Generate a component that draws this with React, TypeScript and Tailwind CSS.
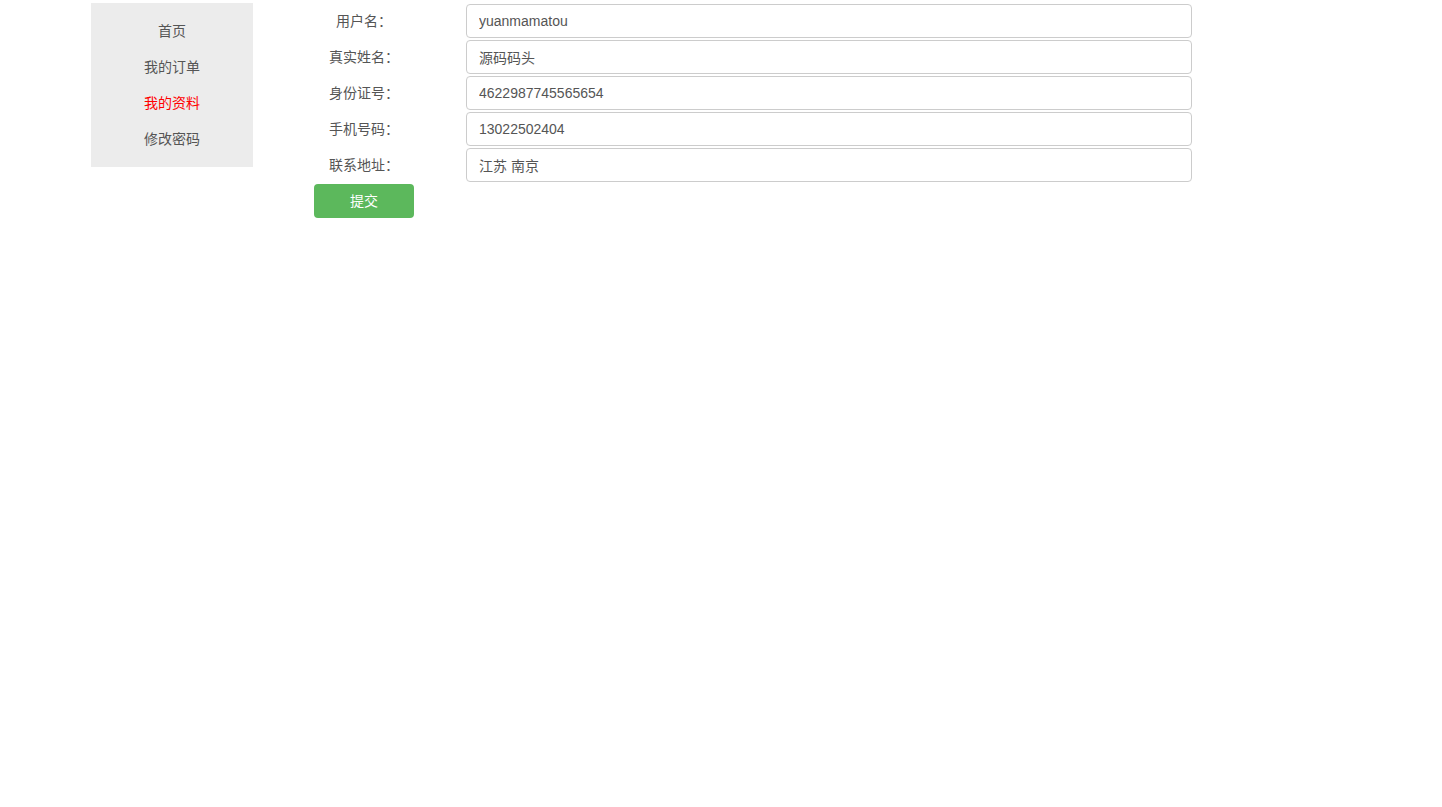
import React from 'react';

const font = "font-['Liberation_Sans','Noto_Sans_CJK_SC',sans-serif]";

const navItems = [
  { label: '首页', active: false },
  { label: '我的订单', active: false },
  { label: '我的资料', active: true },
  { label: '修改密码', active: false },
];

const fields = [
  { label: '用户名：', value: 'yuanmamatou' },
  { label: '真实姓名：', value: '源码码头' },
  { label: '身份证号：', value: '4622987745565654' },
  { label: '手机号码：', value: '13022502404' },
  { label: '联系地址：', value: '江苏 南京' },
];

export default function App() {
  return (
    <div className={`min-h-[807px] bg-white ${font} text-sm text-[#555]`}>
      <div className="mx-auto flex w-[1260px] items-start pt-[3px]">
        {/* 左侧菜单 */}
        <ul className="w-[162px] bg-[#ececec] py-[10px]">
          {navItems.map((item) => (
            <li
              key={item.label}
              className={`h-9 leading-9 text-center ${item.active ? 'text-[#ff0000]' : 'text-[#555]'}`}
            >
              {item.label}
            </li>
          ))}
        </ul>

        {/* 资料表单 */}
        <form className="ml-[61px] flex flex-col">
          {fields.map((f) => (
            <div key={f.label} className="flex h-9 items-center">
              <label className="w-[100px] text-center">{f.label}</label>
              <input
                defaultValue={f.value}
                className="ml-[52px] h-[34px] w-[726px] rounded border border-[#ccc] px-3 text-sm text-[#555] outline-none"
              />
            </div>
          ))}
          <div className="flex h-9 items-center">
            <button
              type="button"
              className="h-[34px] w-[100px] rounded bg-[#5cb85c] text-sm text-white"
            >
              提交
            </button>
          </div>
        </form>
      </div>
    </div>
  );
}
